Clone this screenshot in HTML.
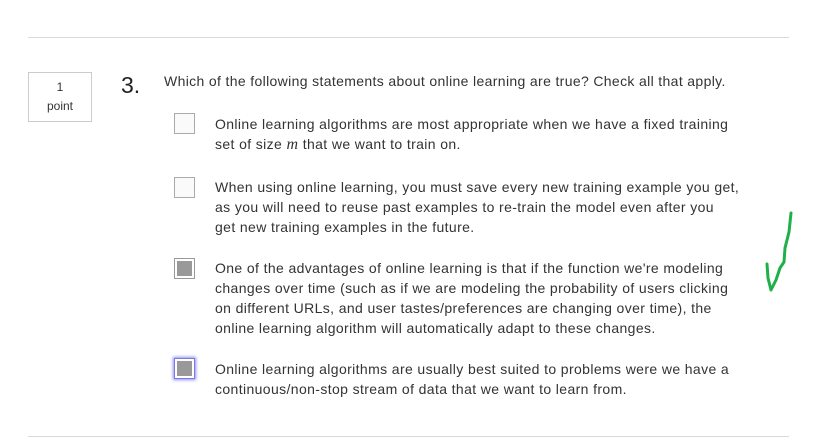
<!DOCTYPE html>
<html><head><style>
body{margin:0;width:819px;height:445px;background:#fff;position:relative;font-family:"Liberation Sans",sans-serif;color:#333;overflow:hidden}
.hr{position:absolute;left:28px;width:761px;height:1px;background:#d9d9d9}
.pt{position:absolute;left:28px;top:72px;font-size:12px;text-align:center;line-height:19px;padding-top:5px;box-sizing:border-box;height:50px;width:64px;border:1px solid #ccc}
.num{position:absolute;left:121px;top:72px;font-size:23px;color:#222}
.q{position:absolute;left:164px;top:73px;font-size:14px;letter-spacing:0.35px}
.cb{position:absolute;left:174px;width:21px;height:21px;box-sizing:border-box;border:1px solid #aaa;background:#fafafa}
.cb.on{border:2px solid #fff;outline:1px solid #999;background:#999;width:19px;height:19px;left:175px}
.cb.foc{box-shadow:0 0 3px 2px #8f8ff0;outline:1px solid #7a7ae0}
.t{position:absolute;left:215px;font-size:14px;line-height:20px;letter-spacing:0.38px}
</style></head><body>
<div class="hr" style="top:37px"></div>
<div class="hr" style="top:436px"></div>
<div class="pt">1<br>point</div>
<div class="num">3.</div>
<div class="q">Which of the following statements about online learning are true? Check all that apply.</div>
<div class="cb" style="top:113px"></div>
<div class="t" style="top:114px">Online learning algorithms are most appropriate when we have a fixed training<br>set of size <i style="font-family:'Liberation Serif',serif;font-size:16px">m</i> that we want to train on.</div>
<div class="cb" style="top:177px"></div>
<div class="t" style="top:177px">When using online learning, you must save every new training example you get,<br>as you will need to reuse past examples to re-train the model even after you<br>get new training examples in the future.</div>
<div class="cb on" style="top:259px"></div>
<div class="t" style="top:258px">One of the advantages of online learning is that if the function we're modeling<br>changes over time (such as if we are modeling the probability of users clicking<br>on different URLs, and user tastes/preferences are changing over time), the<br>online learning algorithm will automatically adapt to these changes.</div>
<div class="cb on foc" style="top:359px"></div>
<div class="t" style="top:359px">Online learning algorithms are usually best suited to problems were we have a<br>continuous/non-stop stream of data that we want to learn from.</div>
<svg style="position:absolute;left:0;top:0" width="819" height="445"><path d="M791 213 L789 232 L785 248 L784 262 L780 268 L776 280 L771 290 L768 278 L767 264" fill="none" stroke="#1fb04a" stroke-width="3" stroke-linecap="round" stroke-linejoin="round"/></svg>
</body></html>
